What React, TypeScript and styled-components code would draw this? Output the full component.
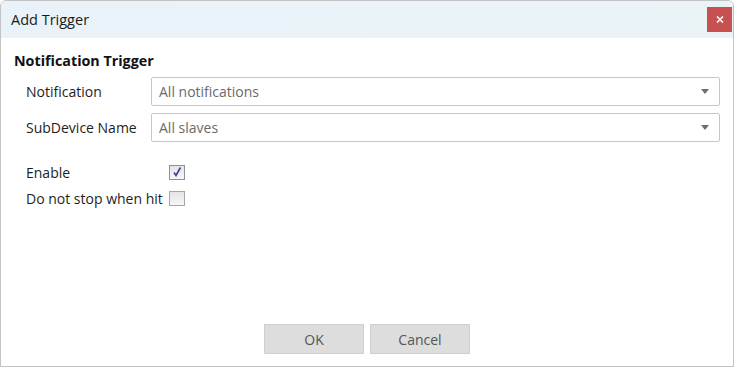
import styled, { createGlobalStyle } from "styled-components";

const GlobalStyle = createGlobalStyle`
    html, body {
        margin: 0;
        padding: 0;
        background: #ffffff;
    }
    body {
        font-family: "Open Sans", "Noto Sans", sans-serif;
    }
`

const Dialog = styled.div`
    box-sizing: border-box;
    width: 734px;
    height: 367px;
    display: flex;
    flex-direction: column;
    border: 1px solid #c3c3c3;
    border-radius: 6px 6px 0 0;
    background: #ffffff;
    overflow: hidden;
`

const TitleBar = styled.div`
    display: flex;
    align-items: center;
    justify-content: space-between;
    height: 37px;
    padding: 0 1px 0 10px;
    background: linear-gradient(90deg, #e9f2f9 0%, #eaf4f7 100%);
    flex-shrink: 0;
`

const TitleText = styled.span`
    font-size: 14.5px;
    color: #1b1b1b;
`

const CloseButton = styled.button`
    width: 25px;
    height: 25px;
    padding: 0;
    border: none;
    background: #c75050;
    color: #ffffff;
    display: flex;
    align-items: center;
    justify-content: center;
`

const Body = styled.div`
    flex: 1;
    display: flex;
    flex-direction: column;
    padding: 13px 13px 12px 13px;
`

const Heading = styled.h2`
    margin: 0 0 7px 0;
    font-size: 14.3px;
    font-weight: bold;
    color: #111111;
`

const FieldGrid = styled.div`
    display: grid;
    grid-template-columns: 125px 1fr;
    row-gap: 7px;
    padding-left: 12px;
`

const Label = styled.span`
    display: flex;
    align-items: center;
    height: 20px;
    font-size: 14px;
    color: #1e1e1e;
`

const FieldLabel = styled(Label)`
    height: auto;
`

const Select = styled.div`
    box-sizing: border-box;
    height: 29px;
    display: flex;
    align-items: center;
    justify-content: space-between;
    padding: 0 10px 0 7px;
    border: 1px solid #c6c6c6;
    border-radius: 2px;
    font-size: 14px;
    color: #6a6a6a;
`

const Arrow = styled.span`
    width: 0;
    height: 0;
    border-left: 4px solid transparent;
    border-right: 4px solid transparent;
    border-top: 5px solid #6f6f6f;
`

const CheckGrid = styled.div`
    display: grid;
    grid-template-columns: auto auto;
    justify-content: start;
    column-gap: 6px;
    row-gap: 6px;
    margin-top: 20px;
    padding-left: 12px;
`

const CheckBox = styled.span<{ $checked?: boolean }>`
    box-sizing: border-box;
    width: 16px;
    height: 15px;
    align-self: center;
    display: flex;
    align-items: center;
    justify-content: center;
    border: 1px solid ${(props) => (props.$checked ? "#8c8fa6" : "#a6a6a6")};
    background: linear-gradient(180deg, #e4e4e4 0%, #f6f6f6 100%);
`

const Footer = styled.div`
    margin-top: auto;
    display: flex;
    justify-content: center;
    gap: 6px;
`

const Button = styled.button`
    width: 100px;
    height: 30px;
    border: 1px solid #d0d0d0;
    background: #dddddd;
    font-family: inherit;
    font-size: 14px;
    color: #555555;
`

const App = () => {
    return (
        <>
            <GlobalStyle />
            <Dialog>
                <TitleBar>
                    <TitleText>Add Trigger</TitleText>
                    <CloseButton>
                        <svg width="8" height="7" viewBox="0 0 8 7">
                            <path d="M1 0.5 L7 6.5 M7 0.5 L1 6.5" stroke="#ffffff" strokeWidth="1.6" />
                        </svg>
                    </CloseButton>
                </TitleBar>
                <Body>
                    <Heading>Notification Trigger</Heading>
                    <FieldGrid>
                        <FieldLabel>Notification</FieldLabel>
                        <Select>
                            All notifications
                            <Arrow />
                        </Select>
                        <FieldLabel>SubDevice Name</FieldLabel>
                        <Select>
                            All slaves
                            <Arrow />
                        </Select>
                    </FieldGrid>
                    <CheckGrid>
                        <Label>Enable</Label>
                        <CheckBox $checked>
                            <svg width="12" height="12" viewBox="0 0 12 12">
                                <path d="M3 6.5 L5 9.5 L9.5 1.5" fill="none" stroke="#3b3f8f" strokeWidth="1.6" />
                            </svg>
                        </CheckBox>
                        <Label>Do not stop when hit</Label>
                        <CheckBox />
                    </CheckGrid>
                    <Footer>
                        <Button>OK</Button>
                        <Button>Cancel</Button>
                    </Footer>
                </Body>
            </Dialog>
        </>
    )
}

export default App;
